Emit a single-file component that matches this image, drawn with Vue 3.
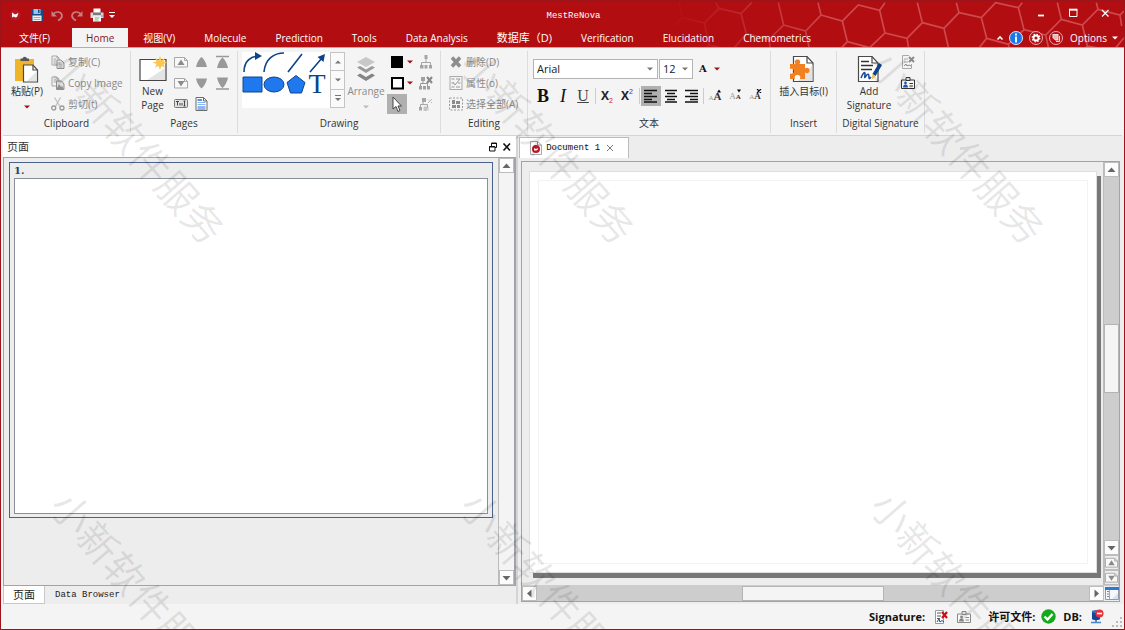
<script setup>
import { ref } from 'vue'

const tabs = ['文件(F)', 'Home', '视图(V)', 'Molecule', 'Prediction', 'Tools', 'Data Analysis', '数据库（D)', 'Verification', 'Elucidation', 'Chemometrics']
const activeTab = ref('Home')
const clipboard = [
  { icon: 'copy', label: '复制(C)' },
  { icon: 'copyimg', label: 'Copy Image' },
  { icon: 'cut', label: '剪切(t)' },
]
const pageTools = [
  { icon: 'pageup', name: 'Page before' },
  { icon: 'up', name: 'Move up' },
  { icon: 'top', name: 'Move to top' },
  { icon: 'pagedown', name: 'Page after' },
  { icon: 'down', name: 'Move down' },
  { icon: 'bottom', name: 'Move to bottom' },
  { icon: 'rename', name: 'Rename' },
  { icon: 'doc', name: 'Page setup' },
]
const editing = [
  { icon: 'delete', label: '删除(D)' },
  { icon: 'props', label: '属性(o)' },
  { icon: 'selectall', label: '选择全部(A)' },
]
const aligns = ['left', 'center', 'right']
const align = ref('left')
</script>

<template>
  <div class="window">
    <svg class="defs" width="0" height="0" aria-hidden="true">
      <symbol id="copy" viewBox="0 0 14 14"><path d="M1 1h5l2 2v7H1zM6 1v2h2M2.500 4h3M2.500 6h3M2.500 8h2" fill="#f4f4f4" stroke="#a4a4a4"/><path d="M6 5h4l3 3v5.500H6z" fill="#e6e6e6" stroke="#8f8f8f"/><path d="M7.500 8h2M7.500 10h4M7.500 12h4" stroke="#9b9b9b"/></symbol>
      <symbol id="copyimg" viewBox="0 0 14 14"><path d="M1 1h5l2 2v7H1zM6 1v2h2M2.500 4h3M2.500 6h3" fill="#f4f4f4" stroke="#a4a4a4"/><path d="M5.500 5h5l2.500 3v5.500H5.500z" fill="#ddd" stroke="#8f8f8f"/><path d="M6 12l2-4 2 3 1-1 2 3H6z" fill="#8f8f8f"/></symbol>
      <symbol id="cut" viewBox="0 0 14 14"><path d="M3.500 0.500l5.500 9M9.500 0.500l-5 9" stroke="#c0c0c0" stroke-width="1.300" fill="none"/><circle cx="2.700" cy="11" r="2" fill="none" stroke="#999" stroke-width="1.300"/><circle cx="11" cy="11" r="2" fill="none" stroke="#999" stroke-width="1.300"/></symbol>
      <symbol id="pageup" viewBox="0 0 14 14"><path d="M.5 2.500h10l3 3v6.500H.5zM10.500 2.500v3h3" fill="#f8f8f8" stroke="#a8a8a8"/><path d="M7 4.500l3.500 5.500h-7z" fill="#8a8a8a"/></symbol>
      <symbol id="pagedown" viewBox="0 0 14 14"><path d="M.5 2.500h10l3 3v6.500H.5zM10.500 2.500v3h3" fill="#f8f8f8" stroke="#a8a8a8"/><path d="M7 10.500L3.500 5h7z" fill="#8a8a8a"/></symbol>
      <symbol id="up" viewBox="0 0 14 14"><path d="M6.500 2C8.500 3.500 11 7 12 12H1C2 7 4.500 3.500 6.500 2z" fill="#999"/></symbol>
      <symbol id="down" viewBox="0 0 14 14"><path d="M6.500 12.500C8.500 11 11 7.500 12 2.500H1C2 7.500 4.500 11 6.500 12.500z" fill="#999"/></symbol>
      <symbol id="top" viewBox="0 0 14 14"><path d="M0 1.500h13" stroke="#999" stroke-width="1.500"/><path d="M6.500 2.500C8.500 4 11 8 12 13H1C2 8 4.500 4 6.500 2.500z" fill="#999"/></symbol>
      <symbol id="bottom" viewBox="0 0 14 14"><path d="M0 13h13" stroke="#999" stroke-width="1.500"/><path d="M6.500 12C8.500 10.500 11 6.500 12 1.500H1C2 6.500 4.500 10.500 6.500 12z" fill="#999"/></symbol>
      <symbol id="rename" viewBox="0 0 14 14"><rect x=".5" y="2.500" width="13" height="8" rx="1" fill="#e2e2e2" stroke="#777"/><path d="M2 4.500h3M3.500 4.500v4M6 6v2.500M8 6v2.500M10.500 4v5M9.500 4h2M9.500 9h2" stroke="#333" stroke-width=".9"/></symbol>
      <symbol id="doc" viewBox="0 0 14 14"><path d="M1 .5h7.500L12 4v9.500H1zM8.500.5V4H12" fill="#fff" stroke="#6b6b6b"/><path d="M2.500 3h4.500" stroke="#1d6fe0" stroke-width="1.500"/><path d="M2.500 5.500h8M2.500 7.500h8" stroke="#8ab6ee"/><path d="M2.500 10h8M2.500 12h8" stroke="#1d6fe0"/></symbol>
      <symbol id="tree" viewBox="0 0 14 14"><path d="M7 3v4M2.500 11V7.500h9V11" fill="none" stroke="#a5a5a5"/><path d="M5.500 0h3v4h-3zM1 10h3.500v3.500H1zM5.500 10h3v3.500h-3zM10 10h3v3.500h-3z" fill="#a5a5a5"/></symbol>
      <symbol id="treex" viewBox="0 0 14 14"><path d="M4 3v4M1.500 11V7.500h7V11" fill="none" stroke="#999"/><path d="M2 1h4v4H2zM0 10h3v3.500H0zM4 10h3v3.500H4zM8 10h3v3.500H8z" fill="#a0a0a0"/><path d="M8 1l5 6M13 1L8 7" stroke="#888" stroke-width="2"/></symbol>
      <symbol id="treeok" viewBox="0 0 14 14"><path d="M4 3v4M1.500 11V7.500h7V11" fill="none" stroke="#a5a5a5"/><path d="M3 1h4v4H3zM0 10h3v3.500H0z" fill="#a5a5a5"/><path d="M9 6l4-4M9 2.500l1 1M12 5l1 1" fill="none" stroke="#b8b8b8"/><path d="M5 10h3v3.500H5zM9 10v3.500" fill="#c4c4c4" stroke="#c4c4c4"/></symbol>
      <symbol id="delete" viewBox="0 0 14 14"><path d="M3 2.500l8 9M11 2.500l-8 9" stroke="#8d8d8d" stroke-width="3.500"/></symbol>
      <symbol id="props" viewBox="0 0 14 14"><rect x="1" y=".5" width="12" height="13" fill="#f4f4f4" stroke="#aaa"/><path d="M2.500 3h3M7 3h4M2.500 11h3M7 11h4M2.500 7h2M9 7h2.500" stroke="#999"/><path d="M4 6l2 3 5-6" stroke="#999" fill="none"/></symbol>
      <symbol id="selectall" viewBox="0 0 14 14"><rect x=".5" y="1" width="13" height="12" fill="none" stroke="#999" stroke-dasharray="2 1.500"/><path d="M3 3h3v4H3zM7 4h4v3H7zM3 8h4v3H3zM8 8h3v3H8z" fill="#8c8c8c"/></symbol>
      <symbol id="left" viewBox="0 0 20 20"><path d="M3 4.500h13M3 7.500h8M3 10.500h13M3 13.500h8M3 16h13" stroke="#111" stroke-width="1.600"/></symbol>
      <symbol id="center" viewBox="0 0 20 20"><path d="M4 4.500h12M6 7.500h8M4 10.500h12M6 13.500h8M4 16h12" stroke="#111" stroke-width="1.600"/></symbol>
      <symbol id="right" viewBox="0 0 20 20"><path d="M4 4.500h13M9 7.500h8M4 10.500h13M9 13.500h8M4 16h13" stroke="#111" stroke-width="1.600"/></symbol>
      <symbol id="caret" viewBox="0 0 6 4"><path d="M0 .5h6L3 3.500z" fill="currentColor"/></symbol>
      <symbol id="s-up" viewBox="0 0 13 13"><path d="M2.500 9l4-4.500 4 4.500z" fill="#666"/></symbol>
      <symbol id="s-down" viewBox="0 0 13 13"><path d="M2.500 5l4 4.500 4-4.500z" fill="#666"/></symbol>
      <symbol id="s-left" viewBox="0 0 13 13"><path d="M8.500 2.500v8L4 6.500z" fill="#666"/></symbol>
      <symbol id="s-right" viewBox="0 0 13 13"><path d="M4.500 2.500v8L9 6.500z" fill="#666"/></symbol>
      <symbol id="badge" viewBox="0 0 14 14"><path d="M.5 4h13v8.500H.5z" fill="#f8f8f8" stroke="currentColor"/><path d="M5 4.500V1.500h4v3z" fill="#ddd" stroke="currentColor"/><path d="M8.500 7.500h3.500M8.500 10h3.500" stroke="currentColor"/><path d="M2 11.500c0-2 1-3 2.500-3s2.500 1 2.500 3z"/><circle cx="4.500" cy="7" r="1.400"/></symbol>
    </svg>

    <header class="header">
      <svg class="hexes" viewBox="0 0 1515 144" aria-hidden="true">
        <defs><linearGradient id="fade" gradientUnits="userSpaceOnUse" x1="150" y1="0" x2="640" y2="0"><stop offset="0" stop-color="#d05054" stop-opacity="0"/><stop offset="1" stop-color="#d05054" stop-opacity=".9"/></linearGradient></defs>
        <path d="M180 5L190 50 256 66 300 22 290 5M300 22L366 38 398 5M366 38L382 98 340 147M190 50L160 80M256 66L270 132 335 148M270 132L255 147M382 98L450 115 494 72 478 5M450 115L455 147M494 72L560 90 606 42 597 5M560 90L572 147M606 42L670 60 718 12 782 28 798 5M670 60L685 122 660 148M685 122L752 140 798 96 782 28M752 140V147M798 96L864 112 910 65 895 5M864 112L870 147M910 65L975 82 1020 35 1012 5M975 82L990 147M1020 35L1087 50 1130 5 1198 20 1210 5M1087 50L1103 112 1075 147M1103 112L1168 130 1215 86 1198 20M1168 130L1172 147M1215 86L1280 102 1327 55 1315 5M1280 102L1290 147M1327 55L1390 72 1437 25 1432 5M1437 25L1503 42 1515 30M1503 42L1508 75M1390 72L1405 135 1395 147M1405 135L1470 147M1485 147L1515 110" fill="none" stroke="url(#fade)" stroke-width="5"/>
      </svg>
      <div class="titlebar">
        <div class="quick">
          <svg class="q-app" viewBox="0 0 16 16"><circle cx="8" cy="8" r="5.500" fill="#c01420"/><path d="M5 10.500V5.500l3 2 3.500-1.500-1.500 4-2 .5-1-1z" fill="#fff"/></svg>
          <button aria-label="Save"><svg viewBox="0 0 14 14"><path d="M1 1h11.500l.5.500V13H2l-1-1z" fill="#174a86"/><path d="M3.500 1h7v5h-7z" fill="#8ecbf4"/><path d="M8 1.500h1.500V5H8z" fill="#174a86"/><path d="M2.500 7.500h9V13h-9z" fill="#f2f2f2"/><path d="M3.500 9.500h7M3.500 11.500h7" stroke="#aaa"/></svg></button>
          <button aria-label="Undo"><svg viewBox="0 0 14 14"><path d="M3 6.500c2-3 7-3.500 8.500-.5 1.200 2.500-.5 5-3.500 6.500" fill="none" stroke="#c47f80" stroke-width="1.700"/><path d="M1.500 3v5.500H7z" fill="#c47f80"/></svg></button>
          <button aria-label="Redo"><svg viewBox="0 0 14 14"><path d="M11 6.500c-2-3-7-3.500-8.500-.5-1.200 2.500.5 5 3.500 6.500" fill="none" stroke="#c47f80" stroke-width="1.700"/><path d="M12.500 3v5.500H7z" fill="#c47f80"/></svg></button>
          <button aria-label="Print"><svg viewBox="0 0 14 14"><path d="M3.500.5h7V5h-7z" fill="#fff"/><path d="M.5 4.500h13V10H.5z" fill="#d8d8d8"/><path d="M3 4.500h8V7H3z" fill="#7a7a7a"/><path d="M3 8.500h8v5H3z" fill="#fff"/><path d="M4.500 10h5M4.500 12h4" stroke="#6fae7e"/><circle cx="12" cy="8" r=".8" fill="#4b90e0"/></svg></button>
          <button class="q-more" aria-label="Customize"><svg viewBox="0 0 8 8"><path d="M1 1.500h6" stroke="#fff"/><path d="M1 4h6L4 7z" fill="#fff"/></svg></button>
        </div>
        <h1>MestReNova</h1>
        <div class="controls">
          <button aria-label="Minimize"><svg viewBox="0 0 12 12"><path d="M3 8.500h6" stroke="#fff" stroke-width="1.800"/></svg></button>
          <button aria-label="Maximize"><svg viewBox="0 0 12 12"><path d="M2.500 3h7.500v6.500H2.500z" fill="none" stroke="#fff"/><path d="M2 2.500h8.500" stroke="#fff" stroke-width="1.600"/></svg></button>
          <button aria-label="Close"><svg viewBox="0 0 12 12"><path d="M3 3l6.500 6.500M9.500 3L3 9.500" stroke="#fff" stroke-width="1.200"/></svg></button>
        </div>
      </div>
      <div class="tabrow">
        <nav class="tabs">
          <button v-for="t in tabs" :key="t" :class="{ active: t === activeTab }" @click="activeTab = t">{{ t }}</button>
        </nav>
        <div class="tabtools">
          <button aria-label="Collapse ribbon"><svg width="8" height="8" viewBox="0 0 8 8"><path d="M1.500 5.500L4 3l2.500 2.500" fill="none" stroke="#fff" stroke-width="1.600"/></svg></button>
          <button aria-label="Info"><svg width="16" height="16" viewBox="0 0 16 16"><circle cx="8" cy="8" r="6.500" fill="#1878e8" stroke="#dbe8ff"/><path d="M8 3.500v2M8 6.500v6" stroke="#fff" stroke-width="1.800"/></svg></button>
          <button aria-label="Settings"><svg width="16" height="16" viewBox="0 0 16 16"><circle cx="8" cy="8" r="6.500" fill="#b21014" stroke="#e9a9aa"/><circle cx="8" cy="8" r="2.500" fill="none" stroke="#fff" stroke-width="1.800"/><circle cx="8" cy="8" r="3.800" fill="none" stroke="#fff" stroke-width="1.200" stroke-dasharray="1.500 1.480"/></svg></button>
          <button aria-label="Notes"><svg width="16" height="16" viewBox="0 0 16 16"><circle cx="8" cy="8" r="6.500" fill="#b21014" stroke="#e9a9aa"/><path d="M4.500 4h6v6.500H7.500L4.500 8z" fill="#f6dada"/><path d="M11.500 6v5.500H8" fill="none" stroke="#f6dada"/><path d="M5.500 6h4M5.500 8h4" stroke="#cc6468" stroke-width=".6"/></svg></button>
          <button class="options">Options <svg width="6" height="4"><use href="#caret"/></svg></button>
        </div>
      </div>
    </header>

    <section class="ribbon">
      <div class="group g-clip">
        <div class="body">
          <button class="big"><svg width="28" height="28" viewBox="0 0 28 28"><path d="M2 4h19v22H2z" fill="#f0b428"/><path d="M7.500 6V3.500h2a2.300 2.300 0 0 1 4.500 0h2V6z" fill="#555"/><path d="M10.500 10h9.500l4.500 5v12h-14z" fill="#fff" stroke="#4a4a4a" stroke-width="1.200"/><path d="M20 10v5h4.500" fill="none" stroke="#4a4a4a" stroke-width="1.200"/><path d="M24 16v10H14z" fill="#e4e4e4"/></svg><span>粘贴(P)</span><svg class="red" width="6" height="4"><use href="#caret"/></svg></button>
          <div class="rows">
            <button v-for="c in clipboard" :key="c.label" disabled><svg width="14" height="14"><use :href="'#' + c.icon"/></svg>{{ c.label }}</button>
          </div>
        </div>
        <h2>Clipboard</h2>
      </div>
      <div class="group g-pages">
        <div class="body">
          <button class="big"><svg width="28" height="28" viewBox="0 0 28 28"><path d="M1 4.500h26v21H1z" fill="#fff" stroke="#444" stroke-width="1.200"/><path d="M26 13v12H8z" fill="#e4e4e4"/><path d="M21 1l1.500 4 3.500-2-1.500 3.500 4 1-4 1.500L26 12.500l-3.500-1.500L21 15l-1.500-4-3.500 1.500L17.500 9l-4-1.500 4-1L16 3l3.500 2z" fill="#f8c850"/></svg><span>New<br>Page</span></button>
          <div class="icons">
            <button v-for="p in pageTools" :key="p.icon" :aria-label="p.name"><svg width="14" height="14"><use :href="'#' + p.icon"/></svg></button>
          </div>
        </div>
        <h2>Pages</h2>
      </div>
      <div class="group g-draw">
        <div class="body">
          <div class="gallery">
            <svg width="88" height="56" viewBox="0 0 88 56" aria-label="Shapes">
              <g fill="none" stroke="#0d4488" stroke-width="1.600"><path d="M2 20C2 9 9 4 17 4M22 20C23 7 32 1 42 1M46 20L60 2M68 20L80 6"/></g>
              <path d="M13 0l7 4-7 4zM83 2l-1.500 8-6-5z" fill="#0d4488"/>
              <g fill="#1f78ee" stroke="#0d4488"><path d="M1 25h19v15H1z"/><ellipse cx="32" cy="32.500" rx="10" ry="7.500"/><path d="M54 23.500l9 7-3.500 10.500h-11L45 30.500z"/></g>
              <text x="75" y="41" text-anchor="middle" font-family="Liberation Serif, serif" font-size="28" fill="#0d4488">T</text>
            </svg>
            <div class="spin">
              <button aria-label="Previous shapes"><svg width="6" height="4" viewBox="0 0 6 4"><path d="M0 3.500h6L3 .5z" fill="#777"/></svg></button>
              <button aria-label="Next shapes"><svg width="6" height="4"><use href="#caret"/></svg></button>
              <button aria-label="All shapes"><svg width="6" height="7" viewBox="0 0 6 7"><path d="M0 .5h6" stroke="#777"/><path d="M0 3h6L3 6z" fill="#777"/></svg></button>
            </div>
          </div>
          <button class="big arrange" disabled><svg width="22" height="28" viewBox="0 0 22 28"><path d="M11 2l9 5-9 5-9-5z" fill="#c8c8c8"/><path d="M2 12.500l3-1.500 6 3.500 6-3.500 3 1.500-9 5.500z" fill="#999"/><path d="M2 20.500l3-2 6 3.500 6-3.500 3 2-9 5.500z" fill="#858585"/></svg><span>Arrange</span><svg width="6" height="4"><use href="#caret"/></svg></button>
          <div class="paint">
            <button aria-label="Fill colour"><svg width="20" height="14" viewBox="0 0 20 14"><path d="M4 1h12v12H4z"/></svg><svg class="red" width="6" height="4"><use href="#caret"/></svg></button>
            <button aria-label="Line colour"><svg width="20" height="14" viewBox="0 0 20 14"><path d="M5 2h11v10.500H5z" fill="#fff" stroke="#000" stroke-width="2"/></svg><svg class="red" width="6" height="4"><use href="#caret"/></svg></button>
            <button aria-label="Select"><svg class="picked" width="20" height="20" viewBox="0 0 20 20"><path d="M6 3v12l3-2.500 2 5 2-1-2-4.500h3.500z" fill="#fff" stroke="#444"/></svg></button>
          </div>
          <div class="rows trees">
            <button aria-label="Group" disabled><svg width="14" height="14"><use href="#tree"/></svg></button>
            <button aria-label="Ungroup" disabled><svg width="14" height="14"><use href="#treex"/></svg></button>
            <button aria-label="Regroup" disabled><svg width="14" height="14"><use href="#treeok"/></svg></button>
          </div>
        </div>
        <h2>Drawing</h2>
      </div>
      <div class="group g-edit">
        <div class="body">
          <div class="rows">
            <button v-for="c in editing" :key="c.label" disabled><svg width="14" height="14"><use :href="'#' + c.icon"/></svg>{{ c.label }}</button>
          </div>
        </div>
        <h2>Editing</h2>
      </div>
      <div class="group g-text">
        <div class="body">
          <div class="fonts">
            <label class="combo family"><select aria-label="Font"><option>Arial</option></select><svg width="6" height="4"><use href="#caret"/></svg></label>
            <label class="combo size"><select aria-label="Font size"><option>12</option></select><svg width="6" height="4"><use href="#caret"/></svg></label>
            <button class="colour" aria-label="Text colour"><b>A</b><svg class="red" width="6" height="4"><use href="#caret"/></svg></button>
          </div>
          <div class="formats">
            <button class="f-b" aria-label="Bold">B</button>
            <button class="f-i" aria-label="Italic">I</button>
            <button class="f-u" aria-label="Underline">U</button>
            <i class="sep"></i>
            <button class="f-x" aria-label="Subscript">X<span class="low">2</span></button>
            <button class="f-x" aria-label="Superscript">X<span class="high">2</span></button>
            <i class="sep"></i>
            <button v-for="a in aligns" :key="a" :class="{ on: a === align }" :aria-label="'Align ' + a" @click="align = a"><svg width="20" height="20"><use :href="'#' + a"/></svg></button>
            <i class="sep"></i>
            <button class="f-a" aria-label="Grow font"><span class="a1">A</span><b class="a3">A</b><svg width="6" height="4" viewBox="0 0 6 4"><path d="M1 3.500h4L3 .5z"/></svg></button>
            <button class="f-a" aria-label="Shrink font"><span class="a2">A</span><b class="a1">A</b><svg width="6" height="4" viewBox="0 0 6 4"><path d="M1 .5h4L3 3.500z"/></svg></button>
            <button class="f-a" aria-label="Reset font"><span class="a1">A</span><b class="a2">A</b><svg width="6" height="4" viewBox="0 0 6 4"><path d="M1 0l4 4M5 0L1 4" stroke="#111" stroke-width="1.300"/></svg></button>
          </div>
        </div>
        <h2>文本</h2>
      </div>
      <div class="group g-insert">
        <div class="body">
          <button class="big"><svg width="28" height="28" viewBox="0 0 28 28"><path d="M4.500 1.500H18L24 8v18.500H4.500z" fill="#fff" stroke="#4a4a4a" stroke-width="1.200"/><path d="M23.500 10v16H9z" fill="#e2e2e2"/><path d="M18 1.500V8h6" fill="none" stroke="#4a4a4a" stroke-width="1.200"/><path d="M1 9h5.500C5 6.500 6 4.500 8.500 4.500S12 6.500 10.500 9H16v4.500c2-1.500 4.500-.5 4.500 2s-2.500 3.500-4.500 2V24h-5c1-3-.5-4-2.500-4s-3.500 1-2.500 4H1v-5.500c3 1 4-1 4-2.500s-1-3-4-2z" fill="#f08020"/></svg><span>插入目标(I)</span></button>
        </div>
        <h2>Insert</h2>
      </div>
      <div class="group g-sign">
        <div class="body">
          <button class="big"><svg width="28" height="28" viewBox="0 0 28 28"><path d="M3.500 1.500H17L23 8v18.500H3.500z" fill="#fff" stroke="#4a4a4a" stroke-width="1.200"/><path d="M17 1.500V8h6" fill="none" stroke="#4a4a4a" stroke-width="1.200"/><path d="M6 6.500h8M6 10.500h12M6 14.500h11" stroke="#333" stroke-width="1.500"/><path d="M6 23c2-5 4-7 4-4s-1 5 1 2 3-2 3 1 1 1 2 0" fill="none" stroke="#174f9c" stroke-width="1.600"/><path d="M25.500 9L19 20" stroke="#0d4488" stroke-width="3.600"/><path d="M17.500 19l3 2-4 4z" fill="#f5c04c"/></svg><span>Add<br>Signature</span></button>
          <div class="rows side">
            <button aria-label="Remove signature" disabled><svg width="14" height="14" viewBox="0 0 14 14"><path d="M8 .5H1.500v13h9V9M3 4h4M3 7h4" fill="none" stroke="#aaa"/><path d="M3 11l2-2 1 2 2-1 2 1" fill="none" stroke="#888"/><path d="M8 2l5 5M13 2L8 7" stroke="#8a8a8a" stroke-width="2"/></svg></button>
            <button class="idcard" aria-label="Identity"><svg width="14" height="14"><use href="#badge"/></svg></button>
          </div>
        </div>
        <h2>Digital Signature</h2>
      </div>
    </section>

    <main class="work">
      <aside class="dock">
        <div class="docktitle">
          <h2>页面</h2>
          <button aria-label="Float"><svg width="10" height="10" viewBox="0 0 10 10"><path d="M3.500 4V1h5v4.500H7M1.500 4.500H7V9H1.500z" fill="none" stroke="#111"/><path d="M3 1.500h6M1 5h6" stroke="#111"/></svg></button>
          <button aria-label="Close panel"><svg width="10" height="10" viewBox="0 0 10 10"><path d="M1.500 1.500l6.500 7M8 1.500l-6.500 7" stroke="#111" stroke-width="1.600"/></svg></button>
        </div>
        <div class="pages">
          <div class="thumbs"><div class="thumb"><p>1.</p><div class="sheet"></div></div></div>
          <div class="vbar light">
            <button aria-label="Scroll up"><svg width="13" height="13"><use href="#s-up"/></svg></button>
            <div class="track"></div>
            <button aria-label="Scroll down"><svg width="13" height="13"><use href="#s-down"/></svg></button>
          </div>
        </div>
        <div class="docktabs"><button class="active">页面</button><button class="mono">Data Browser</button></div>
      </aside>

      <section class="docs">
        <div class="doctabs">
          <div class="doctab">
            <svg width="12" height="14" viewBox="0 0 12 14"><path d="M.5.5h7l4 3.500v9.500H.5z" fill="#fff" stroke="#aaa"/><path d="M7.500.5V4h4" fill="none" stroke="#888"/><circle cx="6" cy="8" r="4" fill="#c01828"/><path d="M4 9.500V7l2 1 2-1-.5 2-1.500.5z" fill="#fff"/></svg>
            <span>Document 1</span>
            <button aria-label="Close document"><svg width="8" height="8" viewBox="0 0 8 8"><path d="M1 1l6 6M7 1L1 7" stroke="#777"/></svg></button>
          </div>
        </div>
        <div class="frame">
          <div class="canvasrow">
            <div class="canvas"><div class="paper"><div class="margin"></div></div></div>
            <div class="vbar">
              <button aria-label="Scroll up"><svg width="13" height="13"><use href="#s-up"/></svg></button>
              <div class="track"><i class="handle"></i></div>
              <button aria-label="Scroll down"><svg width="13" height="13"><use href="#s-down"/></svg></button>
              <button class="pg" aria-label="Previous page"><svg width="13" height="13"><use href="#pageup"/></svg></button>
              <button class="pg" aria-label="Next page"><svg width="13" height="13"><use href="#pagedown"/></svg></button>
            </div>
          </div>
          <div class="hbar">
            <button aria-label="Scroll left"><svg width="13" height="13"><use href="#s-left"/></svg></button>
            <div class="track"><i class="handle"></i></div>
            <button aria-label="Scroll right"><svg width="13" height="13"><use href="#s-right"/></svg></button>
            <button class="view" aria-label="View"><svg width="14" height="13" viewBox="0 0 14 13"><path d="M.5.5h13v12H.5z" fill="#f4f8fc" stroke="#999"/><path d="M0 1.500h14" stroke="#2c78d8" stroke-width="3"/><path d="M4.500 3v9" stroke="#aaa"/><path d="M2 4.500h2M2 7h2M2 9.500h2" stroke="#888"/><path d="M13 6v6H7z" fill="#cfe4fa"/></svg></button>
          </div>
        </div>
      </section>
    </main>

    <footer class="status">
      <b class="s-sig">Signature:</b>
      <svg class="s-icon" width="14" height="14" viewBox="0 0 14 14"><path d="M1.500.5h8v13h-8z" fill="#fff" stroke="#999"/><path d="M3 3h4M3 6h4M3 8.500h3" stroke="#555"/><path d="M3 12l2-3 1 3 2-1.500 2 1.500" fill="none" stroke="#174f9c"/><path d="M8 2l5 6M13 2L8 8" stroke="#c81018" stroke-width="2.200"/></svg>
      <svg class="s-icon s-badge" width="14" height="14"><use href="#badge"/></svg>
      <b class="s-lic">许可文件:</b>
      <svg class="s-icon" width="15" height="15" viewBox="0 0 15 15"><circle cx="7.500" cy="7.500" r="7.200" fill="#14a81c"/><path d="M3.500 7.500l3 3 5-5.500" fill="none" stroke="#fff" stroke-width="2.400"/></svg>
      <b class="s-db">DB:</b>
      <svg class="s-icon" width="14" height="15" viewBox="0 0 14 15"><path d="M2 2v8c0 1.500 8 1.500 8 0V2z" fill="#14479a"/><ellipse cx="6" cy="2.500" rx="4" ry="1.500" fill="#3c70c0"/><path d="M6 11v2" stroke="#222"/><path d="M1 13.500h10" stroke="#3d86d8" stroke-width="1.500"/><circle cx="9.500" cy="4.500" r="4" fill="#e83038"/><path d="M7 4.500h5" stroke="#fff" stroke-width="1.600"/></svg>
      <svg class="grip" width="10" height="10" viewBox="0 0 10 10"><path d="M8 0h2v2H8zM4 4h2v2H4zM8 4h2v2H8zM0 8h2v2H0zM4 8h2v2H4zM8 8h2v2H8z" fill="#bbb"/></svg>
    </footer>

    <div class="marks" aria-hidden="true"><span v-for="n in 6" :key="n">小新软件服务</span></div>
  </div>
</template>

<style>
body { margin: 0; }
</style>

<style scoped>
* { box-sizing: border-box; }
.window { position: relative; display: flex; flex-direction: column; min-height: 100vh; overflow: hidden; border: 1px solid #9c141a; background: #f4f4f4; color: #333; font: 10px/14px "Open Sans", "Noto Sans CJK SC", sans-serif; }
.defs { position: absolute; }
button { display: flex; align-items: center; justify-content: center; margin: 0; padding: 0; border: 0; background: none; color: inherit; font: inherit; white-space: nowrap; }
svg { display: block; flex: none; }
h1, h2, p { margin: 0; font: inherit; }
.header { position: relative; height: 47px; background: #b20e11; border-bottom: 1px solid #dc9b9d; color: #fff; overflow: hidden; }
.hexes { position: absolute; right: 0; top: 0; width: 505px; height: 48px; }
.titlebar { position: relative; display: flex; height: 27px; }
.quick { display: flex; align-items: center; width: 121px; padding-left: 6px; }
.quick svg { width: 14px; height: 14px; }
.quick .q-app { width: 16px; height: 16px; }
.quick button { width: 20px; }
.quick .q-app + button { margin-left: 4px; }
.quick .q-more { width: 10px; }
.quick .q-more svg { width: 8px; height: 8px; }
h1 { flex: 1; text-align: center; line-height: 30px; font-family: "Liberation Mono", monospace; font-size: 9px; }
.controls { display: flex; padding: 0 3px 3px 0; }
.controls button { width: 32px; }
.controls svg { width: 12px; height: 12px; }
.tabrow { position: relative; display: flex; height: 20px; justify-content: space-between; }
.tabs { display: flex; gap: 1px; padding-left: 4px; }
.tabs button { padding: 0 14px; color: #fff; }
.tabs button:first-child { padding-right: 21px; }
.tabs button:nth-child(8) { font-size: 11px; }
.tabs .active { background: #f4f4f4; color: #84181c; }
.tabtools { display: flex; align-items: center; gap: 4px; padding-right: 6px; }
.options { gap: 5px; margin-left: 2px; }
.ribbon { display: flex; height: 88px; margin: 0 2px; border-bottom: 1px solid #d4d4d4; padding-top: 3px; }
.group { display: flex; flex-direction: column; flex: none; border-right: 1px solid #dcdcdc; height: 82px; }
.body { display: flex; height: 64px; }
.group h2 { text-align: center; line-height: 16px; }
.big { flex-direction: column; justify-content: flex-start; padding-top: 4px; line-height: 14px; }
.big > svg + span { margin-top: 1px; }
.big span + svg { margin-top: 7px; }
.red { color: #a01018; }
.rows { display: flex; flex-direction: column; }
.rows button { height: 21px; justify-content: flex-start; gap: 3px; }
button:disabled { color: #8a8a8a; }
.g-clip { width: 128px; }
.g-clip .big { width: 48px; }
.g-pages { width: 107px; }
.g-pages .big { width: 44px; }
.icons { display: grid; grid-template-columns: 21px 21px 21px; grid-auto-rows: 21px; }
.icons button { justify-content: flex-start; }
.g-draw { width: 203px; }
.gallery { display: flex; height: 56px; margin: 1px 0 0 4px; background: #fff; }
.spin { display: flex; flex-direction: column; width: 15px; color: #777; }
.spin button { flex: 1; border: 1px solid #c4c4c4; background: #fafafa; }
.spin button + button { border-top: 0; }
.arrange { width: 42px; }
.arrange span + svg { color: #bbb; }
.paint button { height: 21px; justify-content: flex-start; }
.picked { background: #b0b0b0; }
.trees { margin-left: 4px; }
.paint { width: 28px; }
.g-edit { width: 87px; }
.g-edit .rows { padding-left: 8px; }
.g-text { width: 243px; }
.g-text .body { flex-direction: column; padding: 8px 0 0 5px; }
.fonts { display: flex; height: 20px; }
.combo { position: relative; display: flex; align-items: center; border: 1px solid #b4b4b4; background: #fff; color: #777; }
.combo + .combo { margin-left: 1px; }
.combo select { width: 100%; height: 100%; padding: 0 3px; border: 0; background: none; appearance: none; font: inherit; font-size: 11px; color: #222; }
.combo svg { position: absolute; right: 4px; }
.family { width: 125px; }
.size { width: 34px; }
.colour { gap: 7px; margin-left: 6px; color: #111; }
.colour b { font: bold 10px/14px "DejaVu Serif", serif; }
.formats { display: flex; align-items: center; margin-top: 7px; }
.formats button { width: 20px; height: 20px; }
.formats .sep { width: 1px; height: 16px; margin: 0 1px 0 2px; background: #ccc; }
.formats .on { background: #b0b0b0; }
.formats .f-b { color: #111; font: bold 18px/20px "Liberation Serif", serif; }
.formats .f-i { color: #111; font: italic 18px/20px "Liberation Serif", serif; }
.formats .f-u { color: #444; font: 16px/20px "Liberation Serif", serif; text-decoration: underline; }
.formats .f-x { color: #222; font: bold 12px/20px "Open Sans", sans-serif; }
.f-x span { font: 7px/8px "Liberation Sans", sans-serif; }
.f-x .low { align-self: flex-end; margin-bottom: 1px; color: #e02020; }
.f-x .high { align-self: flex-start; margin-top: 2px; color: #3030d8; }
.formats .f-a { position: relative; align-items: baseline; color: #333; font: 10px/20px "Liberation Serif", serif; }
.f-a span { color: #999; }
.f-a svg { position: absolute; top: 3px; right: 3px; }
.f-a .a1 { font-size: 7px; }
.f-a .a2 { font-size: 9px; }
.f-a .a3 { font-size: 11px; }
.g-insert { width: 66px; align-items: center; }
.g-sign { width: 88px; }
.g-sign .big { width: 64px; }
.idcard { color: #333; }
.idcard svg { fill: #1d5db0; }
.work { display: flex; flex: 1; margin-left: 2px; background: #ededed; }
.dock { display: flex; flex-direction: column; flex: 515 1 0; border-right: 2px solid #d4d4d4; }
.docktitle { display: flex; align-items: center; height: 21px; padding: 0 4px; gap: 4px; background: #fff; }
.docktitle h2 { flex: 1; font-size: 11px; }
.pages { display: flex; flex: 1; border: 1px solid #a0a3aa; border-right-width: 2px; }
.thumbs { flex: 1; padding: 4px 5px; }
.thumb { display: flex; flex-direction: column; height: 356px; border: 1px solid #4a618c; padding: 1px 4px 3px; }
.thumb p { font: bold 10px/14px "DejaVu Serif", serif; color: #26436e; }
.sheet { flex: 1; border: 1px solid #898e9a; background: #fff; }
.vbar { display: flex; flex-direction: column; width: 16px; border-left: 1px solid #bbb; background: #cdcdcd; }
.vbar button, .hbar button { flex: none; width: 15px; height: 15px; background: #fcfcfc; border: 1px solid #bdbdbd; }
.vbar .track { display: flex; flex-direction: column; flex: 1; }
.track::before, .track::after { content: ""; flex: 205; }
.vbar .track::before, .vbar .track::after { flex: 148; }
.handle { background: #f4f4f4; border: 1px solid #b4b4b4; flex: 67; }
.hbar .handle { flex: 141; }
.light { background: #f4f4f4; }
.docktabs { display: flex; height: 18px; font-size: 11px; }
.docktabs button { padding: 0 9px; color: #222; }
.docktabs .active { background: #fff; border: 1px solid #c8c8c8; border-top: 0; }
.docktabs .mono { font: 9px/14px "Liberation Mono", monospace; }
.docktabs .active + .mono { margin-left: 1px; }
.docs { display: flex; flex-direction: column; flex: 605 1 0; padding: 1px 2px 0 1px; }
.doctabs { display: flex; height: 21px; }
.doctab { display: flex; align-items: center; gap: 4px; width: 110px; padding-left: 10px; border: 1px solid #bbb; border-bottom: 0; background: #fff; color: #111; font: 9px/14px "Liberation Mono", monospace; }
.doctab button { margin-left: 2px; }
.frame { display: flex; flex-direction: column; flex: 1; border: 1px solid #a0a3aa; margin: 3px 2px 2px; }
.canvasrow { display: flex; flex: 1; }
.canvas { display: flex; flex: 1; padding: 9px 6px 12px 7px; }
.paper { flex: 1; padding: 8px; background: #fff; border: 1px solid #dedede; box-shadow: 4px 5px 0 #777; }
.margin { height: 100%; border: 1px solid #f3f3f3; }
.vbar .pg { background: #ededed; }
.hbar { display: flex; height: 16px; padding-top: 1px; background: #cdcdcd; }
.hbar .track { display: flex; flex: 1; }
.hbar .view { border: 0; background: #ededed; }
.status { display: flex; align-items: center; justify-content: flex-end; height: 25px; padding-right: 2px; color: #111; font-size: 11px; }
.s-sig { margin-right: 9px; }
.s-badge { margin-left: 9px; color: #888; fill: #888; }
.s-lic { margin: 0 6px 0 17px; }
.s-db { margin: 0 8px 0 7px; }
.grip { margin: 10px 0 0 8px; }
.marks { position: absolute; left: -67px; top: -76px; display: grid; grid-template-columns: 410px 410px 410px; grid-template-rows: 441px 441px; pointer-events: none; }
.marks span { place-self: center; color: rgba(0, 0, 0, .09); font: 40px/40px "Noto Sans CJK SC", sans-serif; white-space: nowrap; transform: rotate(49deg); }
</style>
